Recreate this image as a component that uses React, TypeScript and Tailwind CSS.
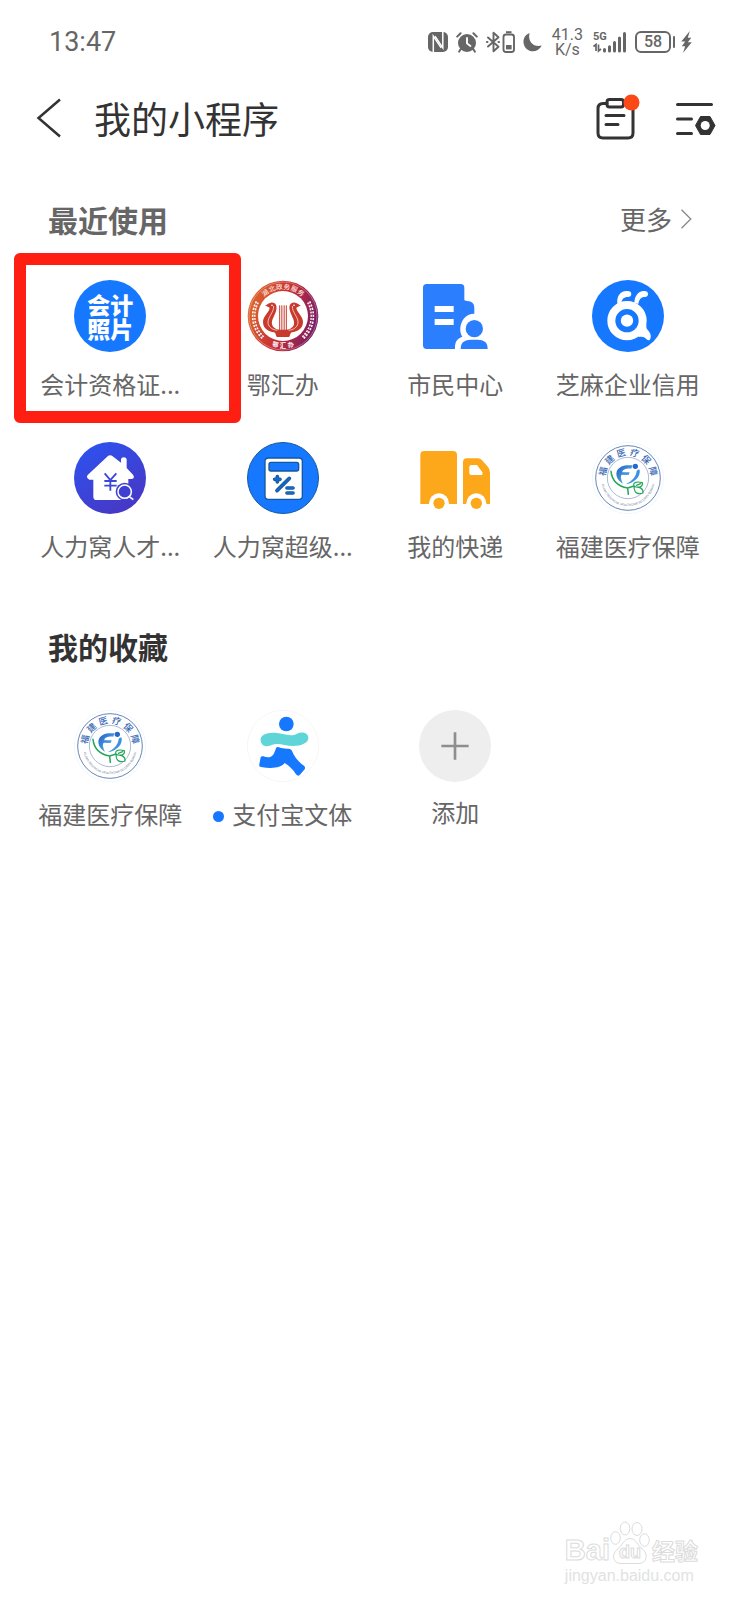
import type { ReactNode } from "react";

/* ---------- status bar icons ---------- */

function NfcIcon() {
  return (
    <svg viewBox="0 0 20 20" className="h-5 w-5" aria-hidden="true">
      <rect width="20" height="20" rx="5" fill="#666" />
      <path d="M5.300 20V4.200L13.200 15.800" fill="none" stroke="#fff" strokeWidth="1.500" />
      <path d="M7 4.200L14.800 15.800V0" fill="none" stroke="#fff" strokeWidth="1.500" />
    </svg>
  );
}

function AlarmIcon() {
  return (
    <svg viewBox="0 0 22 21" className="h-[21px] w-[22px]" fill="none" strokeLinecap="round" aria-hidden="true">
      <circle cx="11" cy="11" r="9" fill="#666" />
      <path d="M1.200 4.600L4.600 1.200M20.800 4.600L17.400 1.200M4.800 17L3.200 19.600M17.200 17L18.800 19.600" stroke="#666" strokeWidth="2" />
      <path d="M11 6v5.400l3.400 2.600" stroke="#fff" strokeWidth="1.900" />
    </svg>
  );
}

function BluetoothIcon() {
  return (
    <svg viewBox="0 0 29 22" className="h-[22px] w-[29px]" fill="none" stroke="#666" aria-hidden="true">
      <path d="M2 6.500L12.500 15.800L7.500 20.300V1.700L12.500 6.200L2 15.500" strokeWidth="1.900" strokeLinejoin="round" strokeLinecap="round" />
      <path d="M1 11h.4M12.600 11h.4" strokeWidth="2.200" strokeLinecap="round" />
      <rect x="17.500" y="3.500" width="10.500" height="17.500" rx="2.500" strokeWidth="1.900" />
      <path d="M20 1.200h5.500" strokeWidth="2" />
      <path d="M20 14h5.600v4.400H20z" fill="#666" stroke="none" />
    </svg>
  );
}

function MoonIcon() {
  return (
    <svg viewBox="0 0 20 20" className="h-5 w-[19px]" aria-hidden="true">
      <path d="M7 .5C1.500 2.500 -.5 8 1 12.800C3 19 10 21.500 15.500 18.400C17.700 17.100 19.200 15.300 19.600 13.800C15.500 15 11 13.800 8.500 10.500C6.300 7.500 6 4 7 .5z" fill="#666" />
    </svg>
  );
}

function SignalIcon() {
  return (
    <svg viewBox="0 0 34 22" className="h-[22px] w-[34px]" aria-hidden="true">
      <text x="0" y="9" fontSize="11" fontWeight="700" fontFamily="'Liberation Sans Narrow', Roboto, sans-serif" fill="#666">5G</text>
      <path d="M.5 15.500L3 13.500V20M5.500 13.500V20L8 18" stroke="#666" strokeWidth="1.700" fill="none" />
      <path d="M11.500 18.600V20M16.500 15.800V20M21.500 11.500V20M26.500 7V20M31.500 2.500V20" stroke="#666" strokeWidth="3" strokeLinecap="round" />
    </svg>
  );
}

function BatteryIcon() {
  return (
    <span className="-mr-0.5 flex items-center gap-0.5">
      <span className="flex h-[22px] w-9 items-center justify-center rounded-[6px] border-2 border-[#666] font-[Roboto,sans-serif] text-base font-medium leading-none text-[#666]">
        58
      </span>
      <span className="h-3 w-[2px] rounded-full bg-[#666]" />
    </span>
  );
}

function BoltIcon() {
  return (
    <svg viewBox="0 0 11 22" className="h-[22px] w-[11px]" aria-hidden="true">
      <path d="M8.800 0L.3 10.500H4.200L.8 15.200H4.200L2 22L10.700 11.300H6.800L10.300 6.800H6.800z" fill="#666" />
    </svg>
  );
}

/* ---------- mini program logos, all on a 216 unit square ---------- */

function Logo({ children }: { children: ReactNode }) {
  return (
    <svg viewBox="0 0 216 216" className="size-[72px] shrink-0" aria-hidden="true">
      {children}
    </svg>
  );
}

function ArcGlyphs({ chars, radius, step, size, fill, bottom = false, weight = 500 }: {
  chars: string; radius: number; step: number; size: number; fill: string; bottom?: boolean; weight?: number;
}) {
  const list = Array.from(chars);
  return (
    <>
      {list.map((c, i) => {
        const offset = (i - (list.length - 1) / 2) * step;
        return (
          <text
            key={i}
            x="108"
            y={bottom ? 108 + radius + size * 0.37 : 108 - radius + size * 0.37}
            textAnchor="middle"
            fontSize={size}
            fontWeight={weight}
            fontFamily="'Noto Sans CJK SC', sans-serif"
            fill={fill}
            transform={`rotate(${bottom ? -offset : offset} 108 108)`}
          >
            {c}
          </text>
        );
      })}
    </>
  );
}

function AccountingLogo() {
  return (
    <span className="flex size-[72px] flex-col items-center justify-center rounded-full bg-[#1677ff] text-[23px] font-black leading-6 text-white">
      <span>会计</span>
      <span>照片</span>
    </span>
  );
}

function HubeiLogo() {
  return (
    <Logo>
      <defs>
        <linearGradient id="hubei-ring" x1="0" y1="0.3" x2="1" y2="0.6">
          <stop offset="0" stopColor="#dd6a2c" />
          <stop offset="0.5" stopColor="#c92f35" />
          <stop offset="1" stopColor="#741c66" />
        </linearGradient>
      </defs>
      <circle cx="108" cy="108" r="106" fill="url(#hubei-ring)" />
      <circle cx="108" cy="108" r="102" fill="none" stroke="#fff" strokeWidth="1.500" opacity="0.6" />
      <circle cx="108" cy="108" r="75" fill="#fff" />
      <ArcGlyphs chars="湖北政务服务" radius={88} step={15} size={20} fill="#fbe3dc" />
      <ArcGlyphs chars="鄂汇办" radius={89} step={15} size={19} fill="#fff" bottom weight={700} />
      <g fill="none" stroke="#fff">
        <path d="M31 66A88 88 0 0 0 49 174" strokeWidth="11" strokeDasharray="6 4" />
        <path d="M185 66A88 88 0 0 1 167 174" strokeWidth="11" strokeDasharray="6 4" />
      </g>
      <g fill="none" stroke="url(#hubei-ring)" strokeWidth="2">
        <path d="M31 66A88 88 0 0 0 49 174" />
        <path d="M185 66A88 88 0 0 1 167 174" />
      </g>
      <g fill="#c83a2c">
        <path d="M54 76C60 75 64 69 72 68C84 66 91 76 88 89C84 107 73 118 75 132C77 143 87 148 98 149H118C129 148 139 143 141 132C143 118 132 107 128 89C125 76 132 66 144 68C152 69 156 75 162 76L148 83C150 99 169 108 168 127C167 146 153 155 134 157C128 162 130 169 126 171H90C86 169 88 162 82 157C63 155 49 146 48 127C47 108 66 99 68 83z" />
      </g>
      <path d="M80 78C81 98 61 111 63 130C66 143 77 149 91 151M136 78C135 98 155 111 153 130C150 143 139 149 125 151" fill="none" stroke="#fff" strokeWidth="2" />
      <path d="M98 76V150M104.500 76V150M111.500 76V150M118 76V150" stroke="#c83a2c" strokeWidth="3" />
      <circle cx="75" cy="76" r="2.500" fill="#fff" />
      <circle cx="141" cy="76" r="2.500" fill="#fff" />
    </Logo>
  );
}

function CitizenLogo() {
  return (
    <Logo>
      <path d="M23 12H125Q136 12 136 23V60Q139 63 145 63Q165 63 166 83V207H23Q12 207 12 196V23Q12 12 23 12z" fill="#2b7fff" />
      <path d="M47 78h57v18H47zM47 117h57v18H47z" fill="#fff" />
      <path d="M216 216H108V199C109 184 116 175 130 170C120 155 122 128 137 113C149 101 167 98 184 106L216 125z" fill="#fff" />
      <circle cx="166" cy="146" r="26" fill="#2b7fff" />
      <path d="M125 207C125 183 139 179 166 179S206 183 206 207z" fill="#2b7fff" />
    </Logo>
  );
}

function SesameLogo() {
  return (
    <Logo>
      <circle cx="108" cy="108" r="108" fill="#1677ff" />
      <g fill="#fff">
        <path d="M76 72C74 49 83 34 104 33Q118 32 118 42Q118 51 107 51C95 51 90 58 88 69z" />
        <path d="M127 68C128 48 138 34 155 33Q168 32 168 42Q168 51 158 51C147 51 141 59 139 72z" />
        <path d="M140 160L164 135C159 150 174 150 176 166C177 173 175 180 171 181C162 180 160 166 140 171z" />
      </g>
      <circle cx="105" cy="122" r="47" fill="#1677ff" stroke="#fff" strokeWidth="24" />
      <circle cx="105" cy="122" r="18.500" fill="#fff" />
    </Logo>
  );
}

function HouseLogo() {
  return (
    <Logo>
      <defs>
        <linearGradient id="house-bg" x1="0" y1="0" x2="0.6" y2="1">
          <stop offset="0" stopColor="#2a55f3" />
          <stop offset="1" stopColor="#4738c6" />
        </linearGradient>
      </defs>
      <circle cx="108" cy="108" r="108" fill="url(#house-bg)" />
      <g fill="#fff">
        <path d="M101 43Q108 37 116 43L141 62V52Q142 46 149 46Q157 46 158 52V78L177 98Q184 108 173 111H163V164Q163 174 153 174H68Q58 174 58 164V113H46Q35 107 41 99z" />
      </g>
      <path d="M92 94L109 114L127 94M91 117H128M91 131H128M109 114V146" stroke="#3a47dc" strokeWidth="5.500" fill="none" />
      <circle cx="152" cy="149" r="27" fill="#3f40d2" />
      <circle cx="152" cy="149" r="20" fill="none" stroke="#fff" strokeWidth="4.500" />
      <path d="M168 166L178 175" stroke="#3f40d2" strokeWidth="12" />
      <path d="M165 163L178 173" stroke="#fff" strokeWidth="5" />
    </Logo>
  );
}

function CalculatorLogo() {
  return (
    <Logo>
      <circle cx="108" cy="108" r="106.500" fill="#1677ff" stroke="#15589f" strokeWidth="3" />
      <rect x="54" y="48" width="112" height="124" rx="10" fill="#fff" stroke="#15589f" strokeWidth="4" />
      <rect x="66" y="61" width="89" height="26" rx="6" fill="#1677ff" stroke="#15589f" strokeWidth="4" />
      <g strokeLinecap="round" fill="none">
        <path d="M91 104V120M83 112H99M127 109L90 146M120 138H138M120 153H138" stroke="#15589f" strokeWidth="11" />
        <path d="M91 104V120M83 112H99M127 109L90 146M120 138H138M120 153H138" stroke="#1769c8" strokeWidth="6" />
      </g>
    </Logo>
  );
}

function TruckLogo() {
  return (
    <Logo>
      <g fill="#fda81b">
        <path d="M16 27H102Q114 27 114 39V186H4V39Q4 27 16 27z" />
        <path d="M144 49H177Q184 49 189 55L207 75Q213 82 213 91V186H132V61Q132 49 144 49z" />
      </g>
      <path d="M157 69H174L190 91V99H157Q151 99 151 93V75Q151 69 157 69z" fill="#fff" />
      <circle cx="60" cy="184" r="30" fill="#fff" />
      <circle cx="172" cy="184" r="30" fill="#fff" />
      <circle cx="60" cy="184" r="17" fill="#fda81b" />
      <circle cx="172" cy="184" r="17" fill="#fda81b" />
    </Logo>
  );
}

function FujianLogo({ id }: { id: string }) {
  return (
    <Logo>
      <defs>
        <linearGradient id={`${id}-blue`} x1="0" y1="0" x2="1" y2="1">
          <stop offset="0" stopColor="#1f5ec4" />
          <stop offset="1" stopColor="#66c4f2" />
        </linearGradient>
        <path id={`${id}-arc`} d="M28 112A80 80 0 0 0 188 112" />
      </defs>
      <circle cx="108" cy="108" r="107" fill="#fff" stroke="#e9f5fd" strokeWidth="2" />
      <circle cx="108" cy="108" r="97" fill="#fff" stroke="#4a6ea8" strokeWidth="2.500" />
      <circle cx="108" cy="108" r="62" fill="none" stroke="#8298bd" strokeWidth="2" />
      <ArcGlyphs chars="福建医疗保障" radius={78} step={30} size={27} fill="#3768b4" />
      <text fontSize="9" fontFamily="Roboto, sans-serif" fill="#70809c">
        <textPath href={`#${id}-arc`} startOffset="50%" textAnchor="middle">
          FUJIAN PROVINCIAL HEALTHCARE SECURITY BUREAU
        </textPath>
      </text>
      <path d="M121 70C97 68 80 73 74 89C70 103 80 118 93 125C87 112 84 101 90 98L110 99L113 91H91C91 82 103 79 118 80z" fill={`url(#${id}-blue)`} />
      <path d="M134 87Q137 81 143 83C146 102 131 121 101 127C120 117 132 105 134 87z" fill="#3a92e4" />
      <circle cx="130" cy="73" r="8" fill="#2468cc" />
      <g fill="none" stroke="#27a65a" strokeWidth="4.500" strokeLinecap="round">
        <path d="M57 88C60 116 80 133 107 138L109 157M107 138L126 132" />
        <path d="M126 133C121 120 136 118 151 122C154 134 141 140 126 133zM126 135C127 156 140 157 153 153C155 139 142 134 126 135zM133 130L146 125" strokeWidth="3.500" />
      </g>
    </Logo>
  );
}

function RunnerLogo() {
  return (
    <Logo>
      <circle cx="108" cy="108" r="107" fill="#fff" stroke="#f1f1f1" strokeWidth="2" />
      <path d="M41 91C39 76 56 67 83 68C106 69 130 82 150 71C166 63 185 69 184 85C183 99 164 108 139 108C113 108 94 97 74 105C58 113 43 109 41 91z" fill="#60d5d8" />
      <circle cx="118" cy="42" r="22" fill="#1677ff" />
      <path d="M87 115Q89 109 96 112C107 116 116 117 125 116Q131 116 134 121C143 143 156 158 171 167Q176 171 173 178L158 195Q153 200 147 193C138 178 127 168 113 159C101 173 78 177 42 171Q35 170 37 163L41 142Q43 137 49 139C59 143 69 143 75 138C83 131 83 124 87 115z" fill="#1677ff" />
    </Logo>
  );
}

function AddLogo() {
  return (
    <Logo>
      <circle cx="108" cy="108" r="108" fill="#eee" />
      <path d="M108 67V149M67 108H149" stroke="#8e8e8e" strokeWidth="8" />
    </Logo>
  );
}

/* ---------- page parts ---------- */

function MiniApp({ logo, name, dot = false, marked = false }: {
  logo: ReactNode; name: string; dot?: boolean; marked?: boolean;
}) {
  return (
    <li className="relative flex min-w-0 justify-center">
      <a href="#" className="flex flex-col items-center gap-3.5 text-[#666]">
        {logo}
        <span className="flex items-center gap-2 whitespace-nowrap text-2xl leading-9">
          {dot && <span className="mt-1 size-[11px] rounded-full bg-[#1677ff]" />}
          {name}
        </span>
      </a>
      {marked && (
        <span className="pointer-events-none absolute -top-[27px] -left-[10px] h-[170px] w-[227px] rounded-[6px] border-[12px] border-[#ff1f12]" />
      )}
    </li>
  );
}

function Watermark() {
  return (
    <footer className="mt-auto mr-10 mb-3 flex flex-col self-end font-['Liberation_Sans',sans-serif]">
      <div className="flex items-end font-bold text-white [-webkit-text-stroke:1px_#dcdcdc]">
        <span className="text-[29px] leading-7">Bai</span>
        <span className="relative flex h-[43px] w-10 items-end justify-center">
          <svg viewBox="0 0 40 43" className="absolute inset-0 h-full w-full" fill="#fff" stroke="#dcdcdc" aria-hidden="true">
            <ellipse cx="5.500" cy="17" rx="4.800" ry="6.300" />
            <ellipse cx="15" cy="7.500" rx="4.800" ry="6.500" />
            <ellipse cx="27" cy="8" rx="5" ry="6.500" />
            <ellipse cx="34.500" cy="19" rx="4.800" ry="6.300" />
            <path d="M20 17.500C26 17.500 27 24 33 28.500C39 34 36 42.500 29 42.500H11C3 42.500 1 34 7 28.500C13 24 14 17.500 20 17.500z" />
          </svg>
          <span className="relative text-[18px] leading-6">du</span>
        </span>
        <span className="pl-0.5 font-['Noto_Sans_CJK_SC',sans-serif] text-[23px] leading-7">经验</span>
      </div>
      <span className="text-base leading-6 text-[#e2e2e2]">jingyan.baidu.com</span>
    </footer>
  );
}

export default function App() {
  return (
    <div className="flex min-h-screen flex-col bg-white font-['Noto_Sans_CJK_SC',sans-serif]">
      <div className="flex h-[84px] items-center justify-between pr-[46px] pl-[49px] font-[Roboto,sans-serif] text-[#666]">
        <time className="text-[27px] leading-8">13:47</time>
        <div className="flex items-center gap-2">
          <NfcIcon />
          <AlarmIcon />
          <BluetoothIcon />
          <MoonIcon />
          <span className="mx-0.5 text-center text-base leading-[15px]">
            41.3
            <br />
            K/s
          </span>
          <SignalIcon />
          <BatteryIcon />
          <BoltIcon />
        </div>
      </div>

      <header className="flex h-[68px] items-center pr-[22px] pl-9 text-[#333]">
        <button type="button" aria-label="返回">
          <svg viewBox="0 0 26 40" className="h-10 w-[26px]" fill="none" stroke="#333" strokeWidth="2.500" aria-hidden="true">
            <path d="M24 1.500L2.500 20L24 38.500" />
          </svg>
        </button>
        <h1 className="ml-8 text-[37px] leading-[52px]">我的小程序</h1>
        <div className="ml-auto flex items-center gap-9">
          <button type="button" aria-label="记录">
            <svg viewBox="0 0 44 48" className="h-12 w-11" fill="none" stroke="#333" strokeWidth="3" strokeLinecap="round" aria-hidden="true">
              <path d="M11 9.500H7Q2 9.500 2 14.500V39Q2 44 7 44H32Q37 44 37 39V14.500Q37 9.500 32 9.500H28" />
              <rect x="11" y="5.500" width="16.500" height="7.500" rx="2.500" />
              <path d="M10 21.500H28M10 30.500H22" />
              <circle cx="35.500" cy="8.500" r="8" fill="#fb4817" stroke="none" />
            </svg>
          </button>
          <button type="button" aria-label="管理">
            <svg viewBox="0 0 40 38" className="h-[38px] w-10" aria-hidden="true">
              <path d="M1.500 5.500H35.500M1.500 20H15.500M1.500 34.500H15.500" stroke="#333" strokeWidth="3" strokeLinecap="round" />
              <path d="M24.500 17.500H34L39 26.500L34 35.500H24.500L19.500 26.500z" fill="#333" stroke="#333" strokeLinejoin="round" />
              <circle cx="29.200" cy="26.500" r="4.500" fill="#fff" />
            </svg>
          </button>
        </div>
      </header>

      <main className="px-6">
        <section className="pt-[47px]">
          <div className="flex h-10 items-center justify-between pr-[22px] pl-6 text-[#666]">
            <h2 className="text-[30px] font-bold leading-10">最近使用</h2>
            <a href="#" className="flex items-center gap-2 text-[26px] leading-10">
              更多
              <svg viewBox="0 0 12 20" className="h-5 w-3" fill="none" stroke="#888" strokeWidth="1.300" aria-hidden="true">
                <path d="M1.500 .8L10.800 10L1.500 19.200" />
              </svg>
            </a>
          </div>
          <ul className="mt-[41px] grid grid-cols-4 gap-y-10">
            <MiniApp logo={<AccountingLogo />} name="会计资格证..." marked />
            <MiniApp logo={<HubeiLogo />} name="鄂汇办" />
            <MiniApp logo={<CitizenLogo />} name="市民中心" />
            <MiniApp logo={<SesameLogo />} name="芝麻企业信用" />
            <MiniApp logo={<HouseLogo />} name="人力窝人才..." />
            <MiniApp logo={<CalculatorLogo />} name="人力窝超级..." />
            <MiniApp logo={<TruckLogo />} name="我的快递" />
            <MiniApp logo={<FujianLogo id="recent" />} name="福建医疗保障" />
          </ul>
        </section>

        <section className="pt-[62px]">
          <h2 className="pl-6 text-[30px] font-bold leading-10 text-[#333]">我的收藏</h2>
          <ul className="mt-11 grid grid-cols-4">
            <MiniApp logo={<FujianLogo id="saved" />} name="福建医疗保障" />
            <MiniApp logo={<RunnerLogo />} name="支付宝文体" dot />
            <li className="flex justify-center">
              <button type="button" className="flex flex-col items-center gap-3 self-start text-2xl leading-9 text-[#666]">
                <AddLogo />
                添加
              </button>
            </li>
          </ul>
        </section>
      </main>

      <Watermark />
    </div>
  );
}
